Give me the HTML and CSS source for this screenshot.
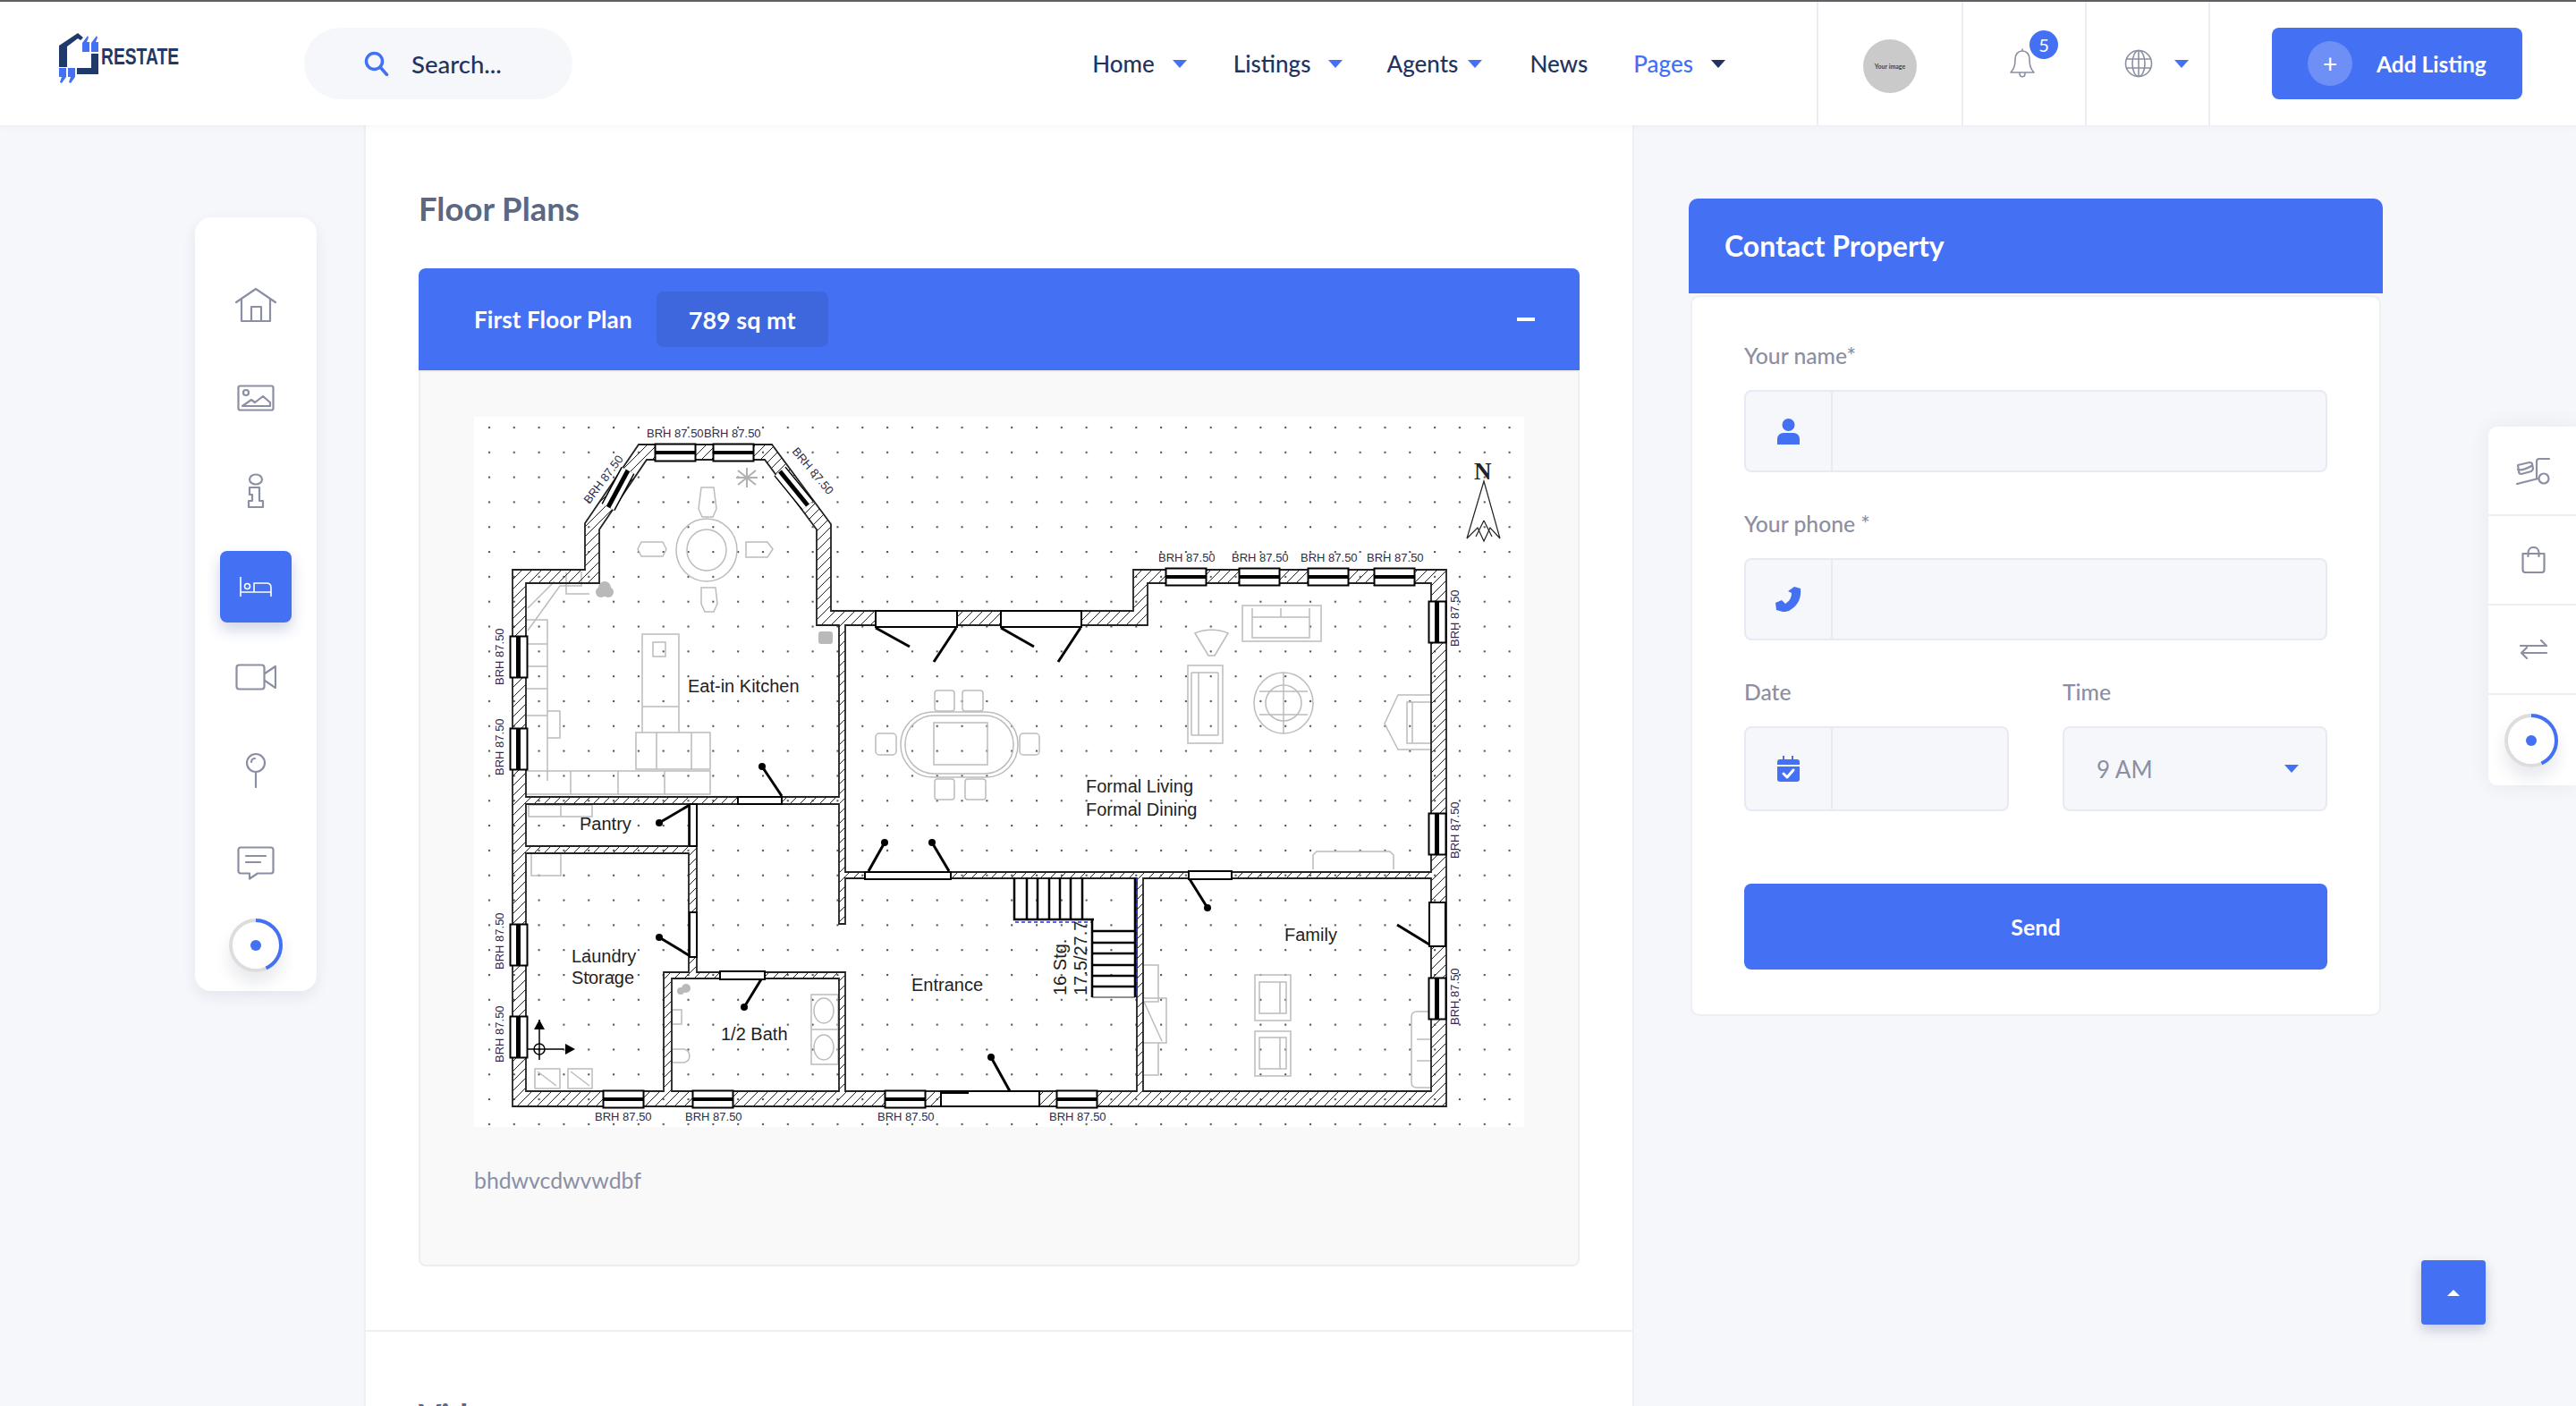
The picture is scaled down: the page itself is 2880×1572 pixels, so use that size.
FILE: index.html
```html
<!DOCTYPE html>
<html lang="en">
<head>
    <meta charset="UTF-8">
    <meta name="viewport" content="width=device-width, initial-scale=1.0">
    <title>Restate - Floor Plans</title>
    <link rel="stylesheet" href="styles.css">
</head>
<body>
    <header class="topbar">
        <a class="logo" href="#">
            <svg class="logo-svg" width="135" height="56" viewBox="65 35 135 56">
                <path class="logo-navy" d="M66 73V49L87 35l6 5-3 3-3-2-12 9v23z"/>
                <path class="logo-navy" d="M102 58h8v23H86v-7h16z"/>
                <path class="logo-blue" d="M92 56V46l6-8 1 2-2 5h3v11zM102 56V46l6-8 1 2-2 5h3v11z"/>
                <path class="logo-blue" d="M66 74h8v10l-5 7-2-1 2-6h-3zM76 74h8v10l-5 7-2-1 2-6h-3z"/>
                <text class="logo-text" x="113" y="70" textLength="87" lengthAdjust="spacingAndGlyphs">RESTATE</text>
            </svg>
        </a>
        <div class="search">
            <svg width="28" height="28" viewBox="0 0 28 28"><circle class="ico-blue-line" cx="11.5" cy="11.5" r="9"/><path class="ico-blue-line" d="M18 18l7.5 8.5"/></svg>
            <span>Search...</span>
        </div>
        <nav class="nav">
            <a class="nav-item nav-home" href="#">Home <i class="caret"></i></a>
            <a class="nav-item nav-listings" href="#">Listings <i class="caret"></i></a>
            <a class="nav-item nav-agents" href="#">Agents <i class="caret"></i></a>
            <a class="nav-item nav-news" href="#">News</a>
            <a class="nav-item nav-pages" href="#">Pages <i class="caret caret-dark"></i></a>
        </nav>
        <div class="hdr-cell hdr-avatar"><span class="avatar">Your image</span></div>
        <div class="hdr-cell hdr-bell">
            <svg width="28" height="34" viewBox="0 0 28 34"><path class="ico-line-thin" d="M14 3c-5 0-8 4-8 9 0 8-1.500 11-5 15h26c-3.500-4-5-7-5-15 0-5-3-9-8-9zM14 1v2M11 28c0 5 6 5 6 0"/></svg>
            <span class="badge">5</span>
        </div>
        <div class="hdr-cell hdr-globe">
            <svg width="32" height="32" viewBox="0 0 32 32"><circle class="ico-line-thin" cx="16" cy="16" r="14.500"/><ellipse class="ico-line-thin" cx="16" cy="16" rx="7" ry="14.500"/><path class="ico-line-thin" d="M2.500 11h27M2.500 21h27M16 1.500v29"/></svg>
            <i class="caret"></i>
        </div>
        <a class="add-listing" href="#"><span class="add-plus">+</span>Add Listing</a>
    </header>

    <div class="page">
        <aside class="side">
            <div class="side-menu">
                <a class="side-link" href="#">
                    <svg width="46" height="40" viewBox="0 0 46 40"><path class="ico-line" d="M1 17L23 2l22 15M7 14v24h32V14M18 38V22h11v16"/></svg>
                </a>
                <a class="side-link" href="#">
                    <svg width="42" height="30" viewBox="0 0 42 30"><rect class="ico-line" x="1.500" y="1.500" width="39" height="27" rx="2"/><circle class="ico-line" cx="10" cy="9" r="3"/><path class="ico-line" d="M6 24l10-7 4 3 9-7 8 7v4z"/></svg>
                </a>
                <a class="side-link" href="#">
                    <svg width="20" height="40" viewBox="0 0 20 40"><ellipse class="ico-line" cx="10" cy="7" rx="7" ry="5.500"/><path class="ico-line" d="M3 16h11v15h4v7H2v-7h4v-7H3z"/></svg>
                </a>
                <a class="side-link side-active" href="#">
                    <svg width="36" height="22" viewBox="0 0 36 22"><path class="ico-white" d="M1 0v22M1 17h34M35 22V12c0-3-2-5-5-5H16v10"/><circle class="ico-white" cx="8.500" cy="10.500" r="3"/></svg>
                </a>
                <a class="side-link" href="#">
                    <svg width="46" height="30" viewBox="0 0 46 30"><rect class="ico-line" x="1.500" y="1.500" width="31" height="27" rx="3"/><path class="ico-line" d="M33 11l12-8v24l-12-8"/></svg>
                </a>
                <a class="side-link" href="#">
                    <svg width="24" height="40" viewBox="0 0 24 40"><circle class="ico-line" cx="12" cy="12" r="10"/><path class="ico-line" d="M12 22v17M7 11c0-2.500 2-4 4-4"/></svg>
                </a>
                <a class="side-link" href="#">
                    <svg width="42" height="38" viewBox="0 0 42 38"><path class="ico-line" d="M4 1.500h34a2.500 2.500 0 0 1 2.500 2.500v24a2.500 2.500 0 0 1-2.500 2.500H23l-9 6v-6H4A2.500 2.500 0 0 1 1.500 28V4A2.500 2.500 0 0 1 4 1.500zM10 11h22M10 18h16"/></svg>
                </a>
                <div class="progress">
                    <svg width="60" height="60" viewBox="0 0 60 60"><circle class="ring-bg" cx="30" cy="30" r="28"/><circle class="ring-on" cx="30" cy="30" r="28" transform="rotate(-90 30 30)"/><circle class="ring-dot" cx="30" cy="30" r="6"/></svg>
                </div>
            </div>
        </aside>

        <main class="content">
            <section class="section">
                <h3 class="section-title">Floor Plans</h3>
                <div class="plan">
                    <div class="plan-head">
                        <span class="plan-name">First Floor Plan</span>
                        <span class="plan-size">789 sq mt</span>
                        <span class="plan-toggle"></span>
                    </div>
                    <div class="plan-body">
                        <svg class="plan-img" width="1174" height="794" viewBox="530 466 1174 794">
                            <defs>
                                <pattern id="dots" x="533" y="464" width="27.82" height="27.82" patternUnits="userSpaceOnUse"><rect x="13" y="13" width="2" height="2" fill="#444"/></pattern>
                                <pattern id="hatch" width="11" height="11" patternUnits="userSpaceOnUse"><path d="M-1 1L1 -1M0 11L11 0M10 12L12 10" stroke="#222" stroke-width="1"/></pattern>
                                <g id="win-h"><rect x="0.500" y="0.500" width="45" height="19" fill="#fff" stroke="#000" stroke-width="2"/><rect x="0" y="8" width="46" height="4"/></g>
                                <g id="win-v"><rect x="0.500" y="0.500" width="19" height="46" fill="#fff" stroke="#000" stroke-width="2"/><rect x="7" y="0" width="5" height="46"/></g>
                            </defs>
                            <rect x="530" y="466" width="1174" height="794" fill="#fff"/>
                            <rect x="530" y="466" width="1174" height="794" fill="url(#dots)"/>

                            <!-- furniture -->
                            <g class="fp-furn">
                                <ellipse cx="790" cy="615" rx="34" ry="35"/><ellipse cx="790" cy="615" rx="22" ry="23"/>
                                <path d="M784 545h14l3 24-4 9h-12l-4-9zM784 657h16l2 18-4 9h-10l-4-9zM717 606h24l4 8-4 8h-24l-4-8zM834 606h24l6 8-6 9h-24z"/>
                                <path d="M588 693h24v180M588 720h24M588 745h24M588 770h24M588 800h24M612 795h14v30h-14M588 862h206v26H588M638 862v26M691 862v26M743 862v26"/>
                                <path d="M590 705l36-50h24v-16M590 680l30-30M633 640v24h26"/>
                                <path d="M718 709h41v110h-41zM730 718h14v16h-14zM711 819h83v41h-83zM734 819v41M773 819v41M718 790h41"/>
                                <rect x="1012" y="800" width="121" height="65" rx="32"/><rect x="1007" y="796" width="131" height="73" rx="36"/><rect x="1044" y="808" width="60" height="47"/>
                                <rect x="1045" y="772" width="22" height="23" rx="3"/><rect x="1076" y="772" width="23" height="23" rx="3"/><rect x="1045" y="871" width="22" height="23" rx="3"/><rect x="1079" y="871" width="23" height="23" rx="3"/>
                                <rect x="979" y="820" width="23" height="24" rx="4"/><rect x="1140" y="820" width="22" height="24" rx="4"/>
                                <path d="M1389 677h88v40h-88zM1400 680v33h64v-33M1400 690h64M1432 680v10"/>
                                <path d="M1336 708c10-5 27-5 37 0l-15 25h-7z"/>
                                <path d="M1328 744h39v87h-39zM1332 752v70M1340 752v70M1362 752v70M1332 752h30M1332 822h30"/>
                                <ellipse cx="1435" cy="786" rx="33" ry="34"/><circle cx="1435" cy="786" r="20"/><path d="M1435 752v68M1408 773h54M1408 799h54"/>
                                <path d="M1600 777h-37l-15 32 15 29h37M1573 785h27v46h-27zM1579 785v46"/>
                                <path d="M1468 972v-16l4-4h82l4 4v16"/>
                                <path d="M1403 1090h40v51h-40zM1408 1098h30v35h-30zM1403 1153h40v50h-40zM1408 1160h30v35h-30zM1431 1098v35M1431 1160v35"/>
                                <path d="M1600 1131h-16q-6 0-6 6v73q0 6 6 6h16M1584 1162h16M1584 1186h16"/>
                                <path d="M1278 1079h17v41h-17M1278 1116h26v50h-26M1278 1166h17v36h-17M1279 1120l20 44"/>
                                <path d="M907 1112h30v78h-30zM907 1151h30"/><ellipse cx="921" cy="1130" rx="11" ry="14"/><ellipse cx="921" cy="1171" rx="11" ry="14"/>
                                <path d="M751 1129h11v16h-11zM751 1173h14a9 8 0 0 1 0 15h-14z"/>
                                <path d="M598 1195h28v22h-28zM635 1195h27v22h-27zM601 1198l21 16M638 1198l21 16"/>
                                <path d="M591 900h71v13h-71zM627 900v13M594 954v25h33v-25"/>
                            </g>
                            <g class="fp-blob">
                                <circle cx="676" cy="657" r="7"/><circle cx="672" cy="662" r="6"/><circle cx="680" cy="662" r="6"/>
                                <rect x="915" y="706" width="16" height="14" rx="3"/>
                                <circle cx="767" cy="1105" r="5"/><circle cx="761" cy="1108" r="4"/>
                            </g>
                            <path class="fp-star" d="M825 526L845 542M845 526L825 542M835 523V545M823 534H847"/>

                            <!-- walls -->
                            <path class="fp-wall" fill-rule="evenodd" d="M573 637H654V585L714 497H863L929 586V683H1267V637H1617V1237H573Z
                                M588 652H670V592L723 514H855L913 592V699H938V891H588Z
                                M588 899H770V946H588Z
                                M588 954H770V1087H742V1220H588Z
                                M751 1094H938V1220H751Z
                                M779 899H938V1033H945V982H1271V1220H945V1087H779Z
                                M945 699H1283V652H1600V975H945Z
                                M1278 982H1600V1220H1278Z"/>

                            <!-- windows -->
                            <use href="#win-h" x="732" y="496"/><use href="#win-h" x="797" y="496"/>
                            <use href="#win-h" x="1303" y="635"/><use href="#win-h" x="1385" y="635"/><use href="#win-h" x="1462" y="635"/><use href="#win-h" x="1536" y="635"/>
                            <use href="#win-h" x="674" y="1219"/><use href="#win-h" x="774" y="1219"/><use href="#win-h" x="989" y="1219"/><use href="#win-h" x="1181" y="1219"/>
                            <use href="#win-v" x="570" y="711"/><use href="#win-v" x="570" y="814"/><use href="#win-v" x="570" y="1033"/><use href="#win-v" x="570" y="1136"/>
                            <use href="#win-v" x="1597" y="672"/><use href="#win-v" x="1597" y="909"/><use href="#win-v" x="1597" y="1093"/>
                            <path class="fp-diag-a" d="M702 526L680 567M872 527L903 565"/>
                            <path class="fp-diag-b" d="M702 526L680 567M872 527L903 565"/>
                            <path class="fp-diag-c" d="M702 526L680 567M872 527L903 565"/>

                            <!-- doors -->
                            <g class="fp-door">
                                <rect x="979" y="683" width="91" height="18"/><rect x="1119" y="683" width="90" height="18"/>
                                <rect x="825" y="891" width="49" height="8"/><rect x="771" y="899" width="8" height="47"/><rect x="771" y="1020" width="8" height="50"/>
                                <rect x="805" y="1086" width="50" height="9"/><rect x="967" y="975" width="96" height="8"/><rect x="1329" y="974" width="48" height="9"/>
                                <rect x="1598" y="1009" width="18" height="49"/><rect x="1052" y="1220" width="110" height="17"/>
                            </g>
                            <path class="fp-leaf" d="M979 702L1017 723M1069 702L1044 740M1119 702L1156 723M1208 702L1183 740M874 890L852 857M771 900L737 920M770 1068L737 1048M851 1095L832 1126M971 974L989 942M1061 974L1042 942M1330 983L1350 1015M1598 1056L1562 1034M1129 1220L1108 1182"/>
                            <g class="fp-hinge">
                                <circle cx="852" cy="857" r="4"/><circle cx="737" cy="920" r="4"/><circle cx="737" cy="1048" r="4"/><circle cx="832" cy="1126" r="4"/>
                                <circle cx="989" cy="942" r="4"/><circle cx="1042" cy="942" r="4"/><circle cx="1350" cy="1015" r="4"/><circle cx="1108" cy="1182" r="4"/>
                                <rect x="1052" y="1219" width="31" height="4"/>
                            </g>

                            <!-- stairs -->
                            <path class="fp-stair" d="M1134 981V1028H1223M1148 981V1028M1160 981V1028M1173 981V1028M1185 981V1028M1197 981V1028M1210 981V1028M1221 1028V1115M1221 1041H1269M1221 1054H1269M1221 1066H1269M1221 1079H1269M1221 1091H1269M1221 1103H1269M1269 981V1115"/>
                            <path class="fp-dash" d="M1135 1031H1220M1271 982V1115"/>
                            <path class="fp-thin" d="M1221 1115H1269"/>

                            <!-- north arrow and origin -->
                            <text class="fp-north" x="1648" y="536">N</text>
                            <path class="fp-thin" d="M1659 538L1640 602L1652 590L1659 605L1666 590L1677 602ZM1659 582L1650 600M1659 582L1668 600"/>
                            <path class="fp-thin-dark" d="M603 1140V1185M590 1173H630"/>
                            <path d="M603 1140l-6 11h12zM643 1173l-11-6v12z"/>
                            <circle class="fp-thin-dark" cx="603" cy="1173" r="6"/>

                            <!-- room labels -->
                            <text class="fp-room" x="769" y="774">Eat-in Kitchen</text>
                            <text class="fp-room" x="648" y="928">Pantry</text>
                            <text class="fp-room" x="639" y="1076">Laundry</text>
                            <text class="fp-room" x="639" y="1100">Storage</text>
                            <text class="fp-room" x="806" y="1163">1/2 Bath</text>
                            <text class="fp-room" x="1019" y="1108">Entrance</text>
                            <text class="fp-room" x="1214" y="886">Formal Living</text>
                            <text class="fp-room" x="1214" y="912">Formal Dining</text>
                            <text class="fp-room" x="1436" y="1052">Family</text>
                            <text class="fp-room" transform="translate(1192 1113) rotate(-90)">16 Stg.</text>
                            <text class="fp-room" transform="translate(1215 1113) rotate(-90)">17.5/27.7</text>

                            <!-- window labels -->
                            <g class="fp-brh">
                                <text x="723" y="489">BRH 87.50</text><text x="787" y="489">BRH 87.50</text>
                                <text x="1295" y="628">BRH 87.50</text><text x="1377" y="628">BRH 87.50</text><text x="1454" y="628">BRH 87.50</text><text x="1528" y="628">BRH 87.50</text>
                                <text x="665" y="1253">BRH 87.50</text><text x="766" y="1253">BRH 87.50</text><text x="981" y="1253">BRH 87.50</text><text x="1173" y="1253">BRH 87.50</text>
                                <text transform="translate(563 766) rotate(-90)">BRH 87.50</text><text transform="translate(563 867) rotate(-90)">BRH 87.50</text>
                                <text transform="translate(563 1084) rotate(-90)">BRH 87.50</text><text transform="translate(563 1188) rotate(-90)">BRH 87.50</text>
                                <text transform="translate(1631 723) rotate(-90)">BRH 87.50</text><text transform="translate(1631 960) rotate(-90)">BRH 87.50</text><text transform="translate(1631 1146) rotate(-90)">BRH 87.50</text>
                                <text transform="translate(659 564) rotate(-53)">BRH 87.50</text><text transform="translate(885 505) rotate(50)">BRH 87.50</text>
                            </g>
                        </svg>
                        <p class="plan-note">bhdwvcdwvwdbf</p>
                    </div>
                </div>
            </section>
            <section class="section">
                <h3 class="section-title">Video</h3>
            </section>
        </main>

        <aside class="contact">
            <h3 class="contact-head">Contact Property</h3>
            <form class="contact-form">
                <label class="field-label">Your name*</label>
                <div class="input-group">
                    <span class="input-icon"><svg width="25" height="29" viewBox="0 0 25 29"><ellipse class="ico-blue" cx="12.500" cy="7" rx="7" ry="7"/><path class="ico-blue" d="M0 29v-6c0-4 3-7 7-7h11c4 0 7 3 7 7v6z"/></svg></span>
                    <input class="input-text" type="text">
                </div>
                <label class="field-label">Your phone *</label>
                <div class="input-group">
                    <span class="input-icon"><svg width="29" height="28" viewBox="0 0 29 28"><path class="ico-blue" d="M21 0l7 2c1 10-2 19-13 25-3 1-5 1-7 1l-7-2-1-8 7-3 4 4c5-3 7-7 7-12l-4-2z"/></svg></span>
                    <input class="input-text" type="text">
                </div>
                <div class="field-row">
                    <div class="field-col">
                        <label class="field-label">Date</label>
                        <div class="input-group input-tall">
                            <span class="input-icon"><svg width="25" height="29" viewBox="0 0 25 29"><path class="ico-blue" d="M6 0h2v4h8V0h2v4h4c2 0 3 1 3 3v3H0V7c0-2 1-3 3-3h3zM0 12h25v14c0 2-1 3-3 3H3c-2 0-3-1-3-3z"/><path class="ico-check" d="M7 20l4 4 7-8"/></svg></span>
                            <input class="input-text" type="text">
                        </div>
                    </div>
                    <div class="field-col">
                        <label class="field-label">Time</label>
                        <div class="input-group input-tall time-select">
                            <span>9 AM</span>
                            <i class="caret"></i>
                        </div>
                    </div>
                </div>
                <button class="send-btn" type="button">Send</button>
            </form>
        </aside>
    </div>

    <div class="rail">
        <a class="rail-link" href="#">
            <svg width="38" height="31" viewBox="0 0 38 31"><path class="ico-line" d="M1 30l24-6M23 23V5c0-2 1-3 3-3h11"/><circle class="ico-line" cx="31" cy="24" r="5.500"/><path class="ico-line" d="M2 9l13-3c2 0 3 1 3 2l1 5c0 1-1 2-2 3L6 19c-2 0-3-1-3-3zM2 14c4 1 10-1 15-4"/></svg>
        </a>
        <a class="rail-link" href="#">
            <svg width="27" height="30" viewBox="0 0 27 30"><path class="ico-line" d="M1.500 8h24v18c0 2-1 3-3 3h-18c-2 0-3-1-3-3zM7.500 11V7c0-8 12-8 12 0v4"/></svg>
        </a>
        <a class="rail-link" href="#">
            <svg width="31" height="22" viewBox="0 0 31 22"><path class="ico-line" d="M1 7h28M24 1l6 6-6 0M30 15H2M8 9l-6 6 6 6"/></svg>
        </a>
        <div class="rail-link rail-progress">
            <div class="progress">
                <svg width="60" height="60" viewBox="0 0 60 60"><circle class="ring-bg" cx="30" cy="30" r="28"/><circle class="ring-on" cx="30" cy="30" r="28" transform="rotate(-90 30 30)"/><circle class="ring-dot" cx="30" cy="30" r="6"/></svg>
            </div>
        </div>
    </div>

    <a class="to-top" href="#"><i class="to-top-arrow"></i></a>
</body>
</html>
```

FILE: styles.css
```css
* {
    box-sizing: border-box;
}

html, body {
    margin: 0;
    height: 100%;
    overflow: hidden;
}

body {
    font-family: Lato, "Open Sans", sans-serif;
    background-color: #f5f7fb;
    color: #1f3560;
    position: relative;
}

a {
    color: inherit;
    text-decoration: none;
}

/* icons */
.ico-line, .ico-line-thin, .ico-white, .ico-blue-line, .ico-check {
    fill: none;
    stroke-linecap: round;
    stroke-linejoin: round;
}
.ico-line { stroke: #8b8fa3; stroke-width: 2.2; }
.ico-line-thin { stroke: #8b8fa3; stroke-width: 1.6; }
.ico-white { stroke: #fff; stroke-width: 1.6; }
.ico-blue-line { stroke: #4470f4; stroke-width: 3.5; }
.ico-blue { fill: #4470f4; }
.ico-check { stroke: #fff; stroke-width: 3; }

.caret {
    display: inline-block;
    width: 0;
    height: 0;
    border-left: 8px solid transparent;
    border-right: 8px solid transparent;
    border-top: 9px solid #4470f4;
}
.caret-dark {
    border-top-color: #1f3560;
}

/* top bar */
.topbar {
    height: 140px;
    display: flex;
    align-items: center;
    background: #fff;
    border-top: 2px solid #5f5f66;
    box-shadow: 0 0 10px rgba(0, 0, 0, 0.06);
    position: relative;
    z-index: 5;
}

.logo {
    margin-left: 65px;
    margin-top: -12px;
    display: block;
    height: 56px;
}
.logo-svg {
    overflow: visible;
}
.logo-navy { fill: #1f3a68; }
.logo-blue { fill: #4470f4; }
.logo-text {
    font-family: "Liberation Sans", Arial, sans-serif;
    font-weight: 700;
    font-size: 25px;
    fill: #1f3a68;
}

.search {
    margin-left: 140px;
    width: 300px;
    height: 80px;
    border-radius: 40px;
    background: #f5f7fb;
    display: flex;
    align-items: center;
    padding-left: 67px;
    gap: 25px;
    font-size: 27.500px;
    font-weight: 500;
}

.nav {
    margin-left: auto;
    padding-right: 102px;
    display: flex;
    align-items: center;
    font-size: 26px;
    font-weight: 500;
}
.nav-item {
    display: flex;
    align-items: center;
    white-space: nowrap;
}
.nav-item .caret { margin-left: 20px; }
.nav-home { margin-right: 52px; }
.nav-listings { margin-right: 49px; }
.nav-agents { margin-right: 53px; }
.nav-agents .caret { margin-left: 11px; }
.nav-news { margin-right: 51px; }
.nav-pages { color: #4470f4; }

.hdr-cell {
    height: 138px;
    border-left: 2px solid #ececf1;
    display: flex;
    align-items: center;
    position: relative;
}
.hdr-avatar {
    width: 162px;
    justify-content: center;
    padding-top: 6px;
}
.avatar {
    width: 60px;
    height: 60px;
    border-radius: 50%;
    background: #cacaca;
    color: #444;
    font-size: 7px;
    font-weight: 700;
    display: flex;
    align-items: center;
    justify-content: center;
    white-space: nowrap;
}
.hdr-bell {
    width: 138px;
    padding-left: 52px;
}
.badge {
    position: absolute;
    left: 74px;
    top: 32px;
    width: 32px;
    height: 32px;
    border-radius: 50%;
    background: #4470f4;
    color: #fff;
    font-size: 20px;
    display: flex;
    align-items: center;
    justify-content: center;
}
.hdr-globe {
    width: 140px;
    border-right: 2px solid #ececf1;
    padding-left: 42px;
    gap: 24px;
}

.add-listing {
    margin-left: 69px;
    margin-right: 60px;
    width: 280px;
    height: 80px;
    border-radius: 8px;
    background: #4470f4;
    color: #fff;
    display: flex;
    align-items: center;
    padding-left: 40px;
    gap: 27px;
    font-size: 24.500px;
    font-weight: 700;
    white-space: nowrap;
}
.add-plus {
    width: 50px;
    height: 50px;
    border-radius: 50%;
    background: rgba(255, 255, 255, 0.22);
    font-size: 28px;
    font-weight: 400;
    display: flex;
    align-items: center;
    justify-content: center;
}

/* page columns */
.page {
    display: grid;
    grid-template-columns: 407px 1420px 1fr;
    align-items: start;
}

.side {
    padding: 103px 0 0 218px;
}
.side-menu {
    width: 136px;
    height: 865px;
    background: #fff;
    border-radius: 18px;
    box-shadow: 0 6px 16px rgba(30, 40, 80, 0.08);
    display: flex;
    flex-direction: column;
    align-items: center;
    padding-top: 58px;
}
.side-link {
    width: 80px;
    height: 80px;
    border-radius: 8px;
    display: flex;
    align-items: center;
    justify-content: center;
    margin-bottom: 24px;
    flex: none;
}
.side-active {
    margin-top: 3px;
    margin-bottom: 21px;
    background: #4470f4;
    box-shadow: 0 8px 16px rgba(40, 60, 140, 0.22);
}

.progress {
    width: 60px;
    height: 60px;
    border-radius: 50%;
    box-shadow: 0 12px 18px rgba(30, 40, 80, 0.1);
    flex: none;
    margin-top: -2px;
}
.ring-bg { fill: #fff; stroke: #dddddd; stroke-width: 4; }
.ring-on { fill: none; stroke: #4470f4; stroke-width: 4; stroke-dasharray: 76 176; }
.ring-dot { fill: #4470f4; }

.content {
    background: #fff;
    border-left: 2px solid #eef0f6;
    border-right: 2px solid #eef0f6;
    height: 1432px;
    overflow: hidden;
}
.section {
    padding: 66px 59px 71px 59px;
    border-bottom: 2px solid #eeeff2;
}
.section-title {
    margin: 0 0 40px;
    font-size: 36.500px;
    line-height: 54px;
    font-weight: 700;
    color: #5c6882;
}

.plan-head {
    height: 114px;
    background: #4470f4;
    border-radius: 8px 8px 0 0;
    color: #fff;
    display: flex;
    align-items: center;
    padding-left: 62px;
    font-size: 26px;
    font-weight: 700;
}
.plan-name {
    letter-spacing: 0.1px;
}
.plan-size {
    margin-left: 27px;
    width: 192px;
    height: 62px;
    border-radius: 8px;
    background: #3e66dd;
    font-size: 27px;
    display: flex;
    align-items: center;
    justify-content: center;
}
.plan-toggle {
    margin-left: auto;
    margin-right: 50px;
    width: 20px;
    height: 4px;
    background: #fff;
}
.plan-body {
    background: #f9f9f9;
    border: 2px solid #eeeeef;
    border-top-width: 2px;
    border-radius: 0 0 8px 8px;
    padding: 50px 60px 0;
    height: 1002px;
}
.plan-img {
    display: block;
}
.plan-note {
    margin: 44px 0 0;
    font-size: 24.800px;
    line-height: 32px;
    color: #8b8fa3;
}

/* floor plan drawing */
.fp-furn { fill: none; stroke: #bcbcbc; stroke-width: 1.5; }
.fp-blob { fill: #b9b9b9; }
.fp-star { fill: none; stroke: #b0b0b0; stroke-width: 2; }
.fp-wall { fill: url(#hatch); stroke: #222; stroke-width: 1.8; }
.fp-diag-a { fill: none; stroke: #000; stroke-width: 17; }
.fp-diag-b { fill: none; stroke: #fff; stroke-width: 14; }
.fp-diag-c { fill: none; stroke: #000; stroke-width: 5; }
.fp-door { fill: #fff; stroke: #000; stroke-width: 2; }
.fp-leaf { fill: none; stroke: #000; stroke-width: 3; }
.fp-hinge { fill: #000; }
.fp-stair { fill: none; stroke: #000; stroke-width: 2.500; }
.fp-dash { fill: none; stroke: #2233dd; stroke-width: 1.5; stroke-dasharray: 4 3; }
.fp-thin { fill: none; stroke: #222; stroke-width: 1.2; }
.fp-thin-dark { fill: none; stroke: #000; stroke-width: 1.5; }
.fp-north {
    font-family: "Liberation Serif", serif;
    font-weight: 700;
    font-size: 27px;
    fill: #222;
}
.fp-room {
    font-family: "Liberation Sans", Arial, sans-serif;
    font-size: 20px;
    fill: #222;
}
.fp-brh text {
    font-family: "Liberation Sans", Arial, sans-serif;
    font-size: 13px;
    fill: #2c2c44;
}

/* contact card */
.contact {
    margin: 82px 0 0 61px;
    width: 776px;
}
.contact-head {
    margin: 0;
    height: 106px;
    background: #4470f4;
    border-radius: 10px 10px 0 0;
    color: #fff;
    display: flex;
    align-items: center;
    padding: 0 0 2px 40px;
    font-size: 32px;
    font-weight: 700;
}
.contact-form {
    margin: 2px 2px 0;
    background: #fff;
    border: 2px solid #eeeff3;
    border-radius: 10px;
    padding: 50px 58px 50px;
}
.field-label {
    display: block;
    font-size: 24.700px;
    line-height: 32px;
    font-weight: 500;
    color: #8b8fa3;
    margin-bottom: 22px;
}
.input-group {
    display: flex;
    align-items: stretch;
    height: 92px;
    background: #f5f7fb;
    border: 2px solid #e7e9f3;
    border-radius: 8px;
    margin-bottom: 42px;
}
.input-icon {
    width: 97px;
    border-right: 2px solid #e7e9f3;
    display: flex;
    align-items: center;
    justify-content: center;
    flex: none;
}
.input-text {
    flex: 1;
    min-width: 0;
    border: none;
    outline: none;
    background: transparent;
}
.field-row {
    display: flex;
    gap: 60px;
}
.field-col {
    flex: 1;
}
.input-tall {
    height: 95px;
    margin-bottom: 81px;
}
.time-select {
    align-items: center;
    justify-content: space-between;
    padding: 0 30px 0 36px;
    font-size: 26px;
    color: #8b8fa3;
}
.send-btn {
    display: block;
    width: 100%;
    height: 96px;
    border: none;
    border-radius: 8px;
    background: #4470f4;
    color: #fff;
    font-family: inherit;
    font-size: 25px;
    font-weight: 700;
}

/* floating bits */
.rail {
    position: absolute;
    right: 0;
    top: 477px;
    width: 98px;
    background: #fff;
    border-radius: 10px 0 0 10px;
    box-shadow: 0 0 24px rgba(30, 40, 80, 0.07);
}
.rail-link {
    height: 100px;
    display: flex;
    align-items: center;
    justify-content: center;
    padding-left: 2px;
    border-bottom: 2px solid #eeeff2;
}
.rail-progress {
    border-bottom: none;
    justify-content: flex-start;
    padding-left: 18px;
    height: 101px;
}
.rail-progress .progress {
    margin-top: 0;
}

.to-top {
    position: absolute;
    left: 2707px;
    top: 1409px;
    width: 72px;
    height: 72px;
    border-radius: 4px;
    background: #4470f4;
    box-shadow: 0 6px 14px rgba(30, 40, 80, 0.22);
    display: flex;
    align-items: center;
    justify-content: center;
}
.to-top-arrow {
    width: 0;
    height: 0;
    border-left: 7px solid transparent;
    border-right: 7px solid transparent;
    border-bottom: 7px solid #fff;
}
```
